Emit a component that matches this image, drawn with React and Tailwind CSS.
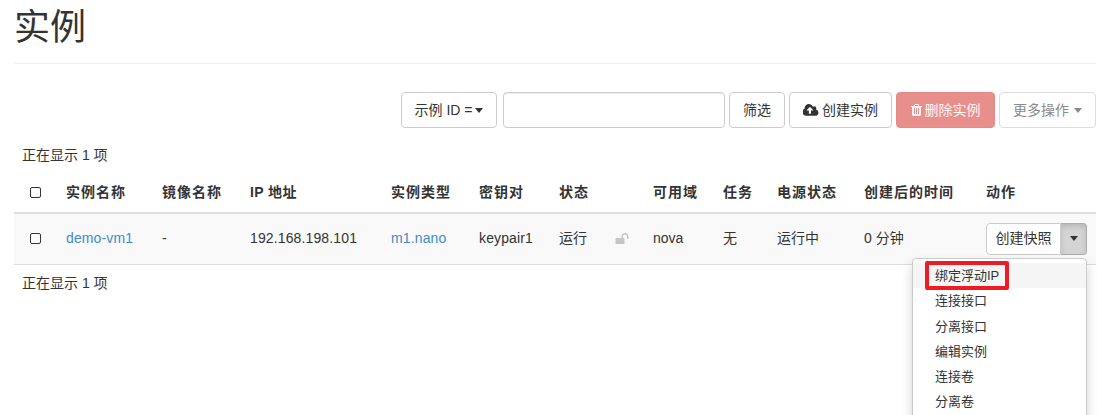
const font = { fontFamily: '"Liberation Sans", "Noto Sans CJK SC", sans-serif' };

const columns = [
  ['实例名称', 'w-[96px] tracking-[1px]'],
  ['镜像名称', 'w-[88px] tracking-[1px]'],
  ['IP 地址', 'w-[141px] tracking-[0.4px]'],
  ['实例类型', 'w-[88px] tracking-[1px]'],
  ['密钥对', 'w-[80px] tracking-[1px]'],
  ['状态', 'w-[94px] tracking-[1px]'],
  ['可用域', 'w-[70px] tracking-[1px]'],
  ['任务', 'w-[54px] tracking-[1px]'],
  ['电源状态', 'w-[87px] tracking-[1px]'],
  ['创建后的时间', 'w-[122px] tracking-[1px]'],
  ['动作', 'tracking-[1px]'],
];

const menuItems = ['绑定浮动IP', '连接接口', '分离接口', '编辑实例', '连接卷', '分离卷'];

function Caret({ className = '' }) {
  return <span className={`inline-block w-0 h-0 border-x-[4.5px] border-x-transparent border-t-[5px] ${className}`} />;
}

function Check() {
  return <span className="block w-[11px] h-[11px] ml-[8px] border border-[#333] rounded-[2px] bg-white" />;
}

function CloudUpload() {
  return (
    <svg viewBox="0 0 1920 1792" className="w-[16px] h-[15px] fill-current">
      <path d="M1216 864q0-14-9-23l-352-352q-9-9-23-9t-23 9l-351 351q-10 12-10 24 0 14 9 23t23 9h224v352q0 13 9.5 22.5t22.5 9.5h192q13 0 22.5-9.5t9.5-22.5v-352h224q13 0 22.5-9.5t9.5-22.5zm640 288q0 159-112.5 271.5t-271.5 112.5h-1088q-185 0-316.5-131.5t-131.5-316.5q0-130 70-240t188-165q-2-30-2-43 0-212 150-362t362-150q156 0 285.5 87t188.5 231q71-62 166-62 106 0 181 75t75 181q0 76-41 138 130 31 213.5 135.5t83.5 238.5z" />
    </svg>
  );
}

function Trash() {
  return (
    <svg viewBox="0 0 1408 1792" className="w-[11px] h-[14px] fill-current">
      <path d="M512 1376v-704q0-14-9-23t-23-9h-64q-14 0-23 9t-9 23v704q0 14 9 23t23 9h64q14 0 23-9t9-23zm256 0v-704q0-14-9-23t-23-9h-64q-14 0-23 9t-9 23v704q0 14 9 23t23 9h64q14 0 23-9t9-23zm256 0v-704q0-14-9-23t-23-9h-64q-14 0-23 9t-9 23v704q0 14 9 23t23 9h64q14 0 23-9t9-23zm-544-992h448l-48-117q-7-9-17-11h-317q-10 2-17 11zm928 32v64q0 14-9 23t-23 9h-96v948q0 83-47 143.5t-113 60.5h-832q-66 0-113-58.5t-47-141.5v-952h-96q-14 0-23-9t-9-23v-64q0-14 9-23t23-9h309l70-167q15-37 54-63t79-26h320q40 0 79 26t54 63l70 167h309q14 0 23 9t9 23z" />
    </svg>
  );
}

function Unlock() {
  return (
    <svg viewBox="0 0 1664 1792" className="w-[14px] h-[14px] fill-[#c4c4c4]">
      <path d="M1664 576v256q0 26-19 45t-45 19h-64q-26 0-45-19t-19-45v-256q0-106-75-181t-181-75-181 75-75 181v192h96q40 0 68 28t28 68v576q0 40-28 68t-68 28h-960q-40 0-68-28t-28-68v-576q0-40 28-68t68-28h672v-192q0-185 131.5-316.5t316.5-131.5 316.5 131.5 131.5 316.5z" />
    </svg>
  );
}

const btn = 'h-[36px] flex items-center justify-center bg-white border border-[#ccc] rounded-[4px] text-[14px] text-[#333]';

export default function App() {
  return (
    <div style={font} className="relative h-[415px] overflow-hidden bg-white pl-[14px] pr-[12px] text-[14px] text-[#333]">
      <div className="h-[64px] border-b border-[#eee]">
        <h1 className="text-[36px] leading-[40px] font-normal text-[#333] pt-[8px]">实例</h1>
      </div>

      <div className="flex justify-end gap-[4px] mt-[28px]">
        <button className={`${btn} w-[96px] gap-[3px] mr-[2px]`}>示例 ID = <Caret className="border-t-[#333]" /></button>
        <div className="w-[222px] h-[36px] border border-[#ccc] rounded-[4px] bg-white shadow-[inset_0_1px_1px_rgba(0,0,0,0.075)]" />
        <button className={`${btn} w-[56px]`}>筛选</button>
        <button className={`${btn} w-[103px] gap-[3px]`}><CloudUpload />创建实例</button>
        <button className="h-[36px] w-[99px] flex items-center justify-center gap-[3px] bg-[#e88f8c] border border-[#e58a87] rounded-[4px] text-white/90"><Trash />删除实例</button>
        <button className={`${btn} w-[97px] gap-[5px] !text-[#8a8a8a] !border-[#ddd]`}>更多操作 <Caret className="border-t-[#8a8a8a]" /></button>
      </div>

      <p className="pl-[9px] mt-[17px] leading-[20px] -ml-px">正在显示 1 项</p>

      <table className="w-full table-fixed mt-[8px] border-collapse">
        <thead>
          <tr className="border-b-2 border-[#ddd] h-[40px]">
            <th className="w-[44px] px-2"><Check /></th>
            {columns.map(([label, w]) => (
              <th key={label} className={`${w} px-2 text-left font-bold whitespace-nowrap`}>{label}</th>
            ))}
          </tr>
        </thead>
        <tbody>
          <tr className="bg-[#f9f9f9] border-b border-[#ddd] h-[51px]">
            <td className="px-2"><Check /></td>
            <td className="px-2"><a className="text-[#428bca] tracking-[0.13px]">demo-vm1</a></td>
            <td className="px-2">-</td>
            <td className="px-2 tracking-[0.13px]">192.168.198.101</td>
            <td className="px-2"><a className="text-[#428bca] tracking-[0.13px]">m1.nano</a></td>
            <td className="px-2 tracking-[0.13px]">keypair1</td>
            <td className="px-2">
              <div className="flex items-center justify-between pr-[8px]">
                <span>运行</span>
                <Unlock />
              </div>
            </td>
            <td className="px-2">nova</td>
            <td className="px-2">无</td>
            <td className="px-2">运行中</td>
            <td className="px-2">0 分钟</td>
            <td className="pl-[8px]">
              <div className="flex h-[32px] w-[101px]">
                <button className="w-[75px] bg-white border border-[#ccc] rounded-l-[4px] text-[#333]">创建快照</button>
                <button className="w-[26px] flex items-center justify-center bg-[#d4d4d4] border border-[#adadad] border-l-0 rounded-r-[4px] shadow-[inset_0_3px_5px_rgba(0,0,0,0.125)]">
                  <Caret className="border-t-[#333]" />
                </button>
              </div>
            </td>
          </tr>
        </tbody>
      </table>

      <p className="pl-[8px] mt-[8px] leading-[20px]">正在显示 1 项</p>

      <ul className="absolute left-[912px] top-[258px] w-[175px] h-[200px] bg-white border border-[#ccc] rounded-[4px] pt-[4px] shadow-[0_6px_12px_rgba(0,0,0,0.175)] text-[13px] text-[#333]">
        {menuItems.map((item, i) => (
          <li key={item} className={`h-[25.3px] leading-[25.3px] pl-[22px] ${i === 0 ? 'bg-[#f5f5f5]' : ''}`}>{item}</li>
        ))}
      </ul>
      <div className="absolute left-[925px] top-[261px] w-[84px] h-[29px] border-4 border-[#ed1c24] rounded-[2px]" />
    </div>
  );
}
